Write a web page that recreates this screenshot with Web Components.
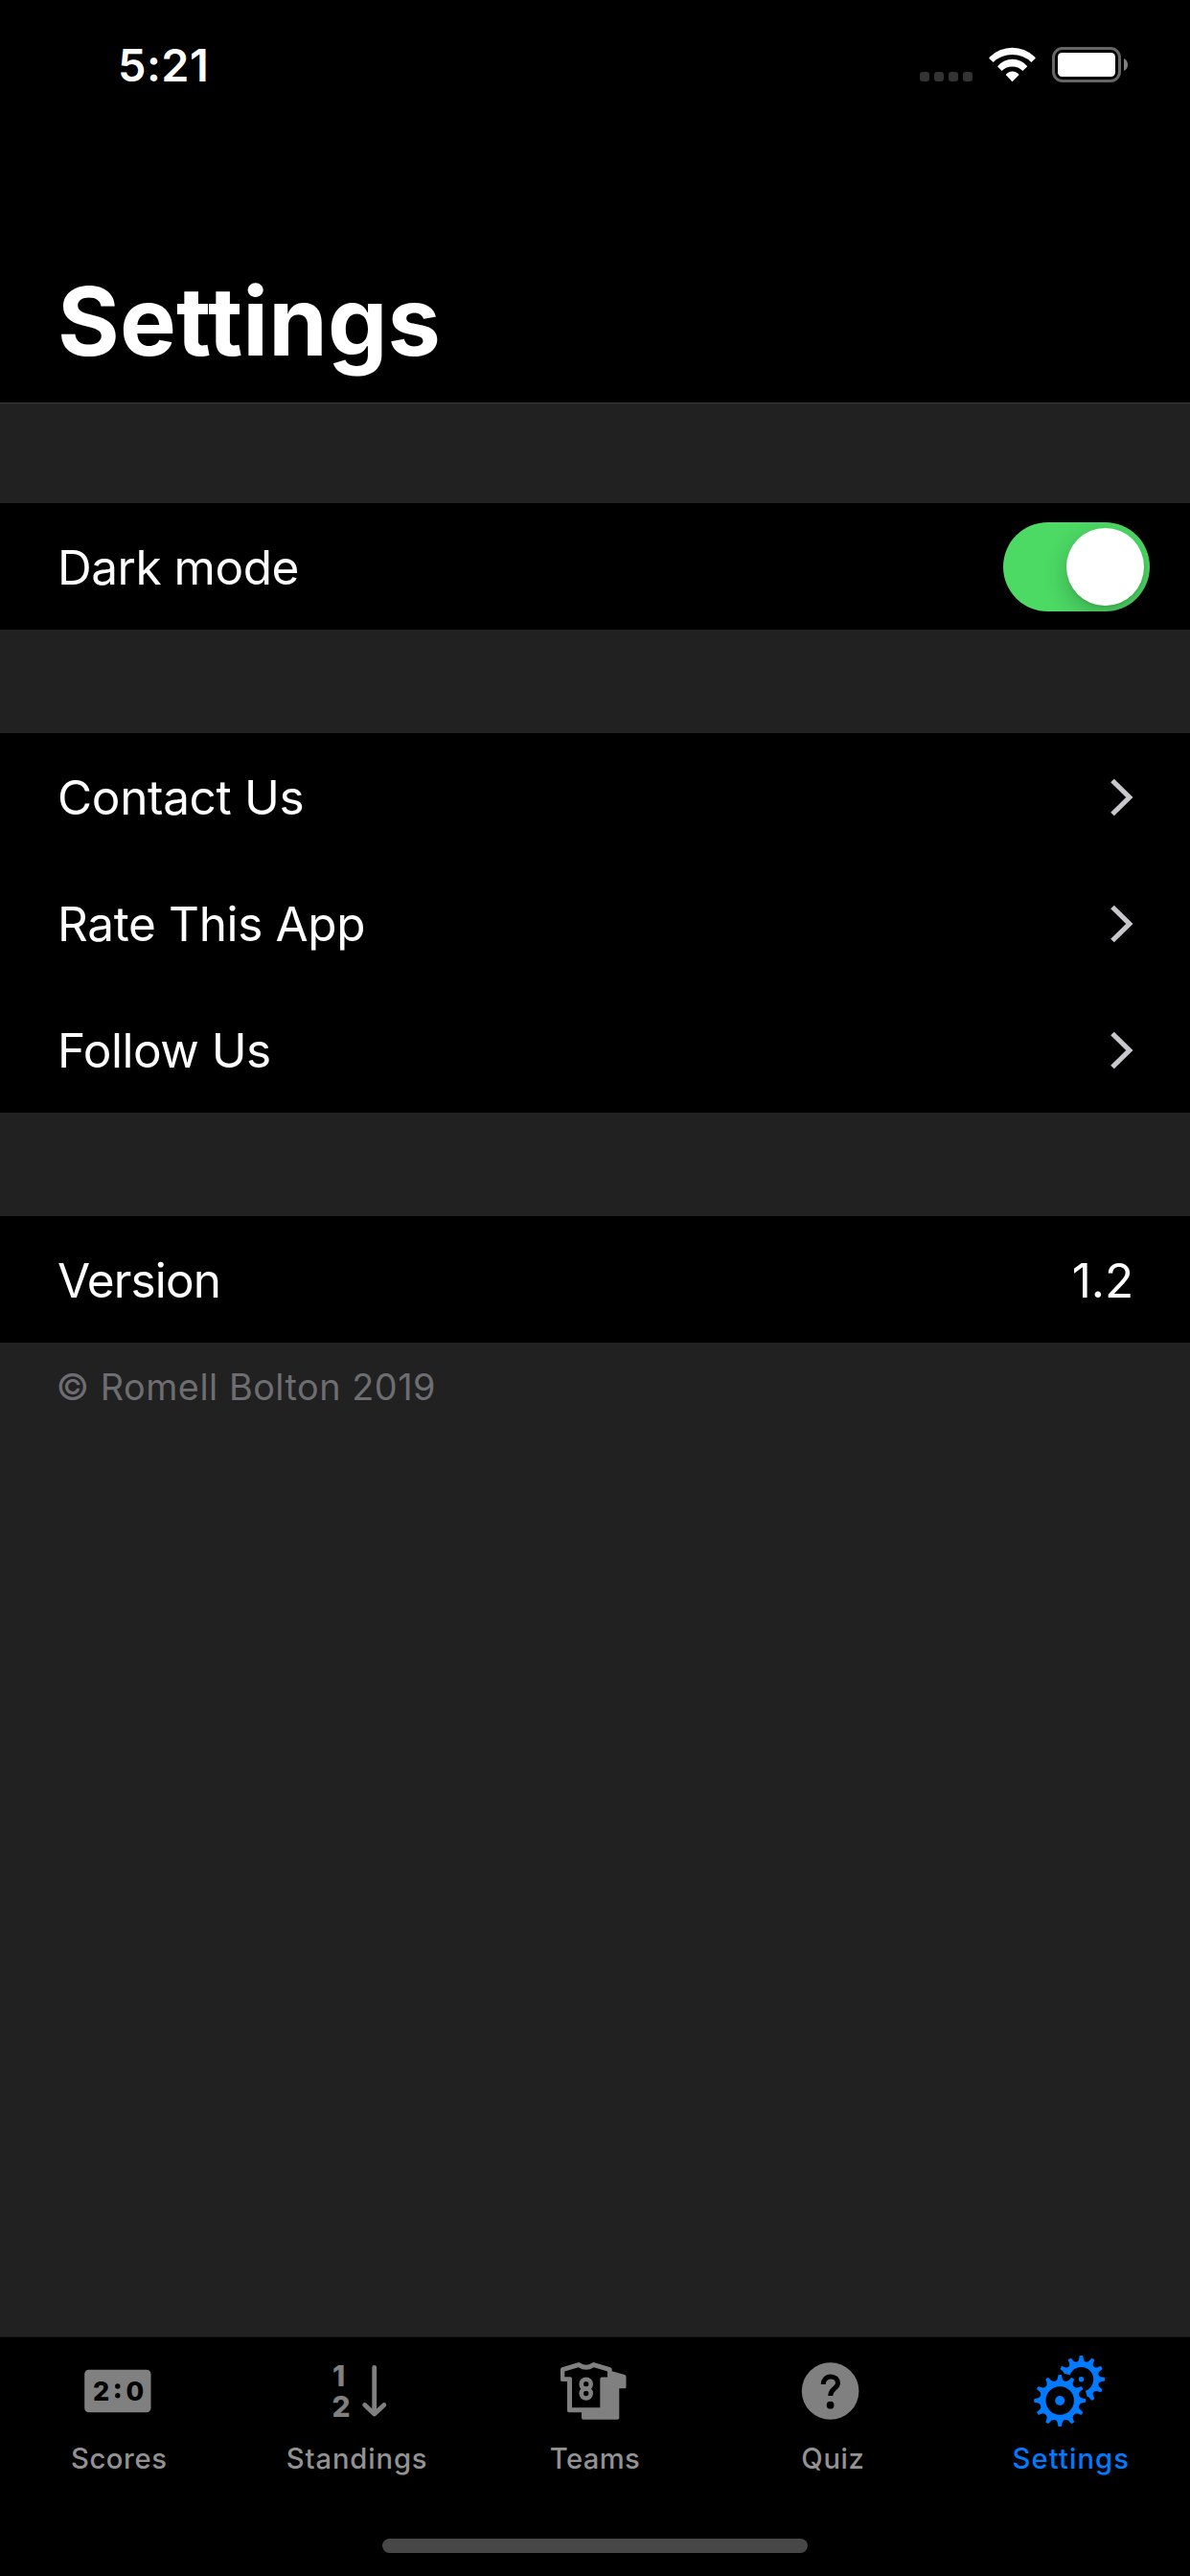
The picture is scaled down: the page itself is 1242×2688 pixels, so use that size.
<!DOCTYPE html>
<html lang="en">
<head>
<meta charset="utf-8">
<title>Settings</title>
<style>
  html, body { margin: 0; background: #000; }
  body { width: 1242px; height: 2688px; overflow: hidden; color: #fff; font-family: Inter, "Liberation Sans", sans-serif; }
</style>
</head>
<body>
<app-screen>
  <status-bar slot="top" time="5:21"></status-bar>
  <nav-title slot="top">Settings</nav-title>

  <settings-group>
    <settings-row style="letter-spacing:-.48px">Dark mode<toggle-switch slot="end"></toggle-switch></settings-row>
  </settings-group>
  <settings-group>
    <settings-row style="letter-spacing:-.34px">Contact Us<row-chevron slot="end"></row-chevron></settings-row>
    <settings-row style="letter-spacing:-.36px">Rate This App<row-chevron slot="end"></row-chevron></settings-row>
    <settings-row style="letter-spacing:-.5px">Follow Us<row-chevron slot="end"></row-chevron></settings-row>
  </settings-group>
  <settings-group>
    <settings-row style="letter-spacing:-.85px">Version<row-value slot="end">1.2</row-value></settings-row>
    <span slot="footer">© Romell Bolton 2019</span>
  </settings-group>

  <tab-bar slot="bottom">
    <tab-item icon="scores" style="letter-spacing:.6px">Scores</tab-item>
    <tab-item icon="standings" style="letter-spacing:.87px">Standings</tab-item>
    <tab-item icon="teams" style="letter-spacing:.4px">Teams</tab-item>
    <tab-item icon="quiz" style="letter-spacing:.62px">Quiz</tab-item>
    <tab-item icon="settings" active style="letter-spacing:1.1px">Settings</tab-item>
  </tab-bar>
</app-screen>

<script>
const define = (name, render) => customElements.define(name, class extends HTMLElement {
  constructor() {
    super();
    this.attachShadow({ mode: 'open' });
  }
  connectedCallback() {
    this.shadowRoot.innerHTML = render(this);
  }
});

define('app-screen', () => `
  <style>
    :host { display: flex; flex-direction: column; width: 1242px; height: 2688px; background: #212121; }
    header { background: #000; height: 420px; border-bottom: 1px solid #3b3b3b; display: flex; flex-direction: column; justify-content: space-between; }
    main { flex: 1; display: flex; flex-direction: column; gap: 108px; padding-top: 104px; }
  </style>
  <header><slot name="top"></slot></header>
  <main><slot></slot></main>
  <slot name="bottom"></slot>`);

define('status-bar', el => `
  <style>
    :host { display: flex; justify-content: space-between; height: 86px; padding: 0 65px 0 123px; }
    .time { align-self: flex-end; font-size: 46.8px; font-weight: 600; letter-spacing: .5px; line-height: 36px; }
    .icons { display: flex; align-items: flex-end; }
    .dots { display: flex; gap: 5px; padding-bottom: 1px; margin-right: 17px; }
    .dots i { width: 10px; height: 10px; border-radius: 3px; background: #333; }
    svg { display: block; }
    .wifi { margin: 0 17px 1px 0; }
  </style>
  <span class="time">${el.getAttribute('time')}</span>
  <div class="icons">
    <div class="dots"><i></i><i></i><i></i><i></i></div>
    <svg class="wifi" width="49" height="36" viewBox="276 57 147 108" fill="#fff">
      <path d="M278 94Q276 91 278.500 88.500A101 101 0 0 1 420.500 88.500Q423 91 421 94L409 105A86 86 0 0 0 290 105Z"/>
      <path d="M303 118A59.500 59.500 0 0 1 397 118L382 132A46 46 0 0 0 317 132Z"/>
      <path d="M329 144A26 26 0 0 1 371 144L351 164Q349.500 166 348 164Z"/>
    </svg>
    <svg width="79" height="37" viewBox="0 0 79 37">
      <rect x="1.500" y="1.500" width="69" height="34" rx="9.500" fill="none" stroke="#666" stroke-width="3"/>
      <rect x="6" y="6" width="60" height="25" rx="4.500" fill="#fff"/>
      <path d="M75 12Q79 14 79 18.500T75 25Z" fill="#808080"/>
    </svg>
  </div>`);

define('nav-title', () => `
  <style>
    :host { display: block; padding: 0 60px 24px; font-size: 98.9px; font-weight: 700; letter-spacing: .16px; line-height: 122px; }
  </style>
  <slot></slot>`);

define('settings-group', () => `
  <style>
    :host { display: flex; flex-direction: column; }
    ::slotted([slot=footer]) { padding: 22px 58.500px 0; font-size: 37.8px; letter-spacing: .52px; line-height: 48px; color: #6d6d72; }
  </style>
  <slot></slot><slot name="footer"></slot>`);

define('settings-row', () => `
  <style>
    :host { display: flex; align-items: center; justify-content: space-between; height: 132px; background: #000; padding-left: 60px; font-size: 49.500px; }
    .label { padding-top: 1px; line-height: 60px; }
  </style>
  <span class="label"><slot></slot></span><slot name="end"></slot>`);

define('row-value', () => `
  <style>:host { display: block; padding: 1px 59px 0 0; line-height: 60px; letter-spacing: -.15px; }</style>
  <slot></slot>`);

define('row-chevron', () => `
  <style>:host { display: block; margin: 2px 59px 0 0; } svg { display: block; }</style>
  <svg width="25" height="40" viewBox="0 0 25 40"><path d="M3 2.500L20.800 20L3 37.500" fill="none" stroke="#c7c7cc" stroke-width="5.200"/></svg>`);

define('toggle-switch', () => `
  <style>
    :host { display: flex; justify-content: flex-end; box-sizing: border-box; width: 153px; height: 93px; padding: 6px; margin: 1px 42px 0 0; border-radius: 47px; background: #4cd964; overflow: hidden; }
    i { width: 81px; height: 81px; border-radius: 50%; background: #fff; box-shadow: 0 9px 24px rgba(0,0,0,.22), 0 2px 3px rgba(0,0,0,.08); }
  </style>
  <i></i>`);

define('tab-bar', () => `
  <style>
    :host { display: flex; flex-direction: column; justify-content: space-between; box-sizing: border-box; height: 250px; border-top: 1px solid #151515; background: #000; padding: 11px 0 24px; }
    nav { display: flex; }
    .home { align-self: center; width: 444px; height: 15px; border-radius: 8px; background: #474747; }
  </style>
  <nav><slot></slot></nav>
  <div class="home"></div>`);

/* Closed outline of a cog: flared teeth with blunt tips around a root circle. */
function cog(cx, cy, tip, root, teeth) {
  const at = (r, deg) => {
    const a = (deg - 90) * Math.PI / 180;
    return (cx + r * Math.cos(a)).toFixed(2) + ' ' + (cy + r * Math.sin(a)).toFixed(2);
  };
  const step = 360 / teeth, k = 27 / tip;
  let d = '';
  for (let i = 0; i < teeth; i++) {
    const c = i * step;
    d += (i ? 'L' : 'M') + at(root, c - step / 2)
      + 'Q' + at(root, c - 6.5 * k) + ' ' + at(tip - 1.2, c - 4.4 * k)
      + 'Q' + at(tip, c - 4 * k) + ' ' + at(tip, c - 2.5 * k)
      + 'L' + at(tip, c + 2.5 * k)
      + 'Q' + at(tip, c + 4 * k) + ' ' + at(tip - 1.2, c + 4.4 * k)
      + 'Q' + at(root, c + 6.5 * k) + ' ' + at(root, c + step / 2);
  }
  return d + 'Z';
}

const ICONS = {
  scores: `
    <rect x="9.200" y="22.700" width="69.300" height="44.500" rx="4.500"/>
    <g fill="#000"><text x="18" y="54.700" font-size="27" font-weight="800">2</text>
    <text x="52.600" y="54.700" font-size="27" font-weight="800">0</text>
    <circle cx="43.800" cy="40" r="2.700"/><circle cx="43.800" cy="49.800" r="2.700"/></g>`,
  standings: `
    <text x="19" y="40" font-size="30" font-weight="800">1</text>
    <text x="18.600" y="72" font-size="30" font-weight="800">2</text>
    <path d="M62.700 20.400V68M52.700 59.500L62.700 69L72.900 59.500" fill="none" stroke="currentColor" stroke-width="4.800" stroke-linecap="round" stroke-linejoin="round"/>`,
  teams: `
    <path fill-rule="evenodd" d="M10.500 20.300L27.300 15.200Q28.600 14.800 29.600 15.800Q35.700 19.600 41.800 15.800Q43 14.800 44.300 15.200L61 20.300Q62.700 20.900 62.700 22.600V24.300L76 28.100Q77.500 28.500 77.500 30V40.800Q77.500 42.300 76 42.300H70.300V73Q70.300 74.700 68.600 74.700H32.700Q31 74.700 31 73V67.300H17.700Q16 67.300 16 65.600V35H10.700Q9 35 9 33.300V22.300Q9 20.800 10.500 20.300Z
      M13.300 24.400V30.300H19.300Q21 30.300 21 32V62.200H50.300V32.300Q50.300 30.500 52 30.500H58V24.400L43.800 20.200Q35.700 25.200 27.600 20.200Z"/>
    <g fill="none" stroke="currentColor" stroke-width="4.600"><circle cx="35.700" cy="37.700" r="5"/><circle cx="35.700" cy="47.500" r="5"/></g>`,
  quiz: `
    <circle cx="42.600" cy="45" r="29.800"/>
    <path d="M35.200 38A7.500 8 0 0 1 42.800 29.900C47.500 29.900 50.500 33 50.500 36.800C50.500 42.200 42.700 42.500 42.700 50" fill="none" stroke="#000" stroke-width="5"/>
    <circle cx="42.600" cy="59.700" r="3.900" fill="#000"/>`,
  settings: `
    <mask id="behind" maskUnits="userSpaceOnUse" x="0" y="0" width="90" height="90">
      <rect width="90" height="90" fill="#fff"/><circle cx="33.200" cy="55" r="28.600" fill="#000"/><circle cx="55.500" cy="32.700" r="12.700" fill="#000"/>
    </mask>
    <path mask="url(#behind)" d="${cog(55.5, 32.7, 24.7, 18.6, 12)}"/>
    <circle cx="55.500" cy="32.700" r="2.700"/>
    <path fill-rule="evenodd" d="${cog(33.2, 55, 27, 20.8, 12)}M18.500 55a14.700 14.700 0 1 0 29.400 0a14.700 14.700 0 1 0 -29.400 0Z"/>
    <circle cx="33.200" cy="55" r="5"/>`
};

define('tab-item', el => `
  <style>
    :host { flex: 1; display: flex; flex-direction: column; align-items: center; gap: 8px; color: #808080; font-size: 29.2px; font-weight: 450; line-height: 36px; }
    :host([active]) { color: #007aff; }
    svg { display: block; letter-spacing: 0; }
    span { color: #929292; }
    :host([active]) span { color: inherit; }
  </style>
  <svg width="90" height="90" viewBox="0 0 90 90" fill="currentColor">${ICONS[el.getAttribute('icon')]}</svg>
  <span><slot></slot></span>`);
</script>
</body>
</html>
